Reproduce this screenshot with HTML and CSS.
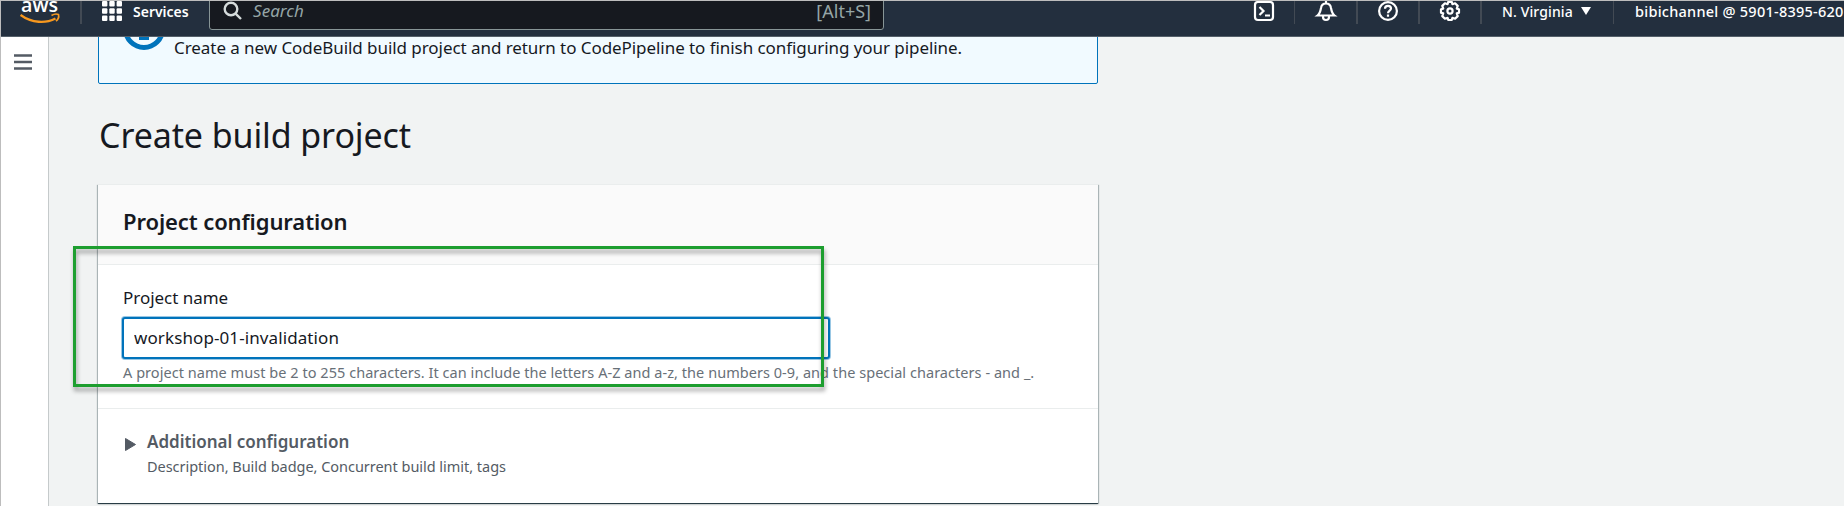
FILE: index.html
```
<!DOCTYPE html>
<html lang="en">
<head>
<meta charset="utf-8">
<title>Create build project</title>
<link rel="stylesheet" href="styles.css">
</head>
<body>
<div class="window">
  <header class="topbar">
    <nav class="nav">
      <svg class="logo" width="42" height="40" viewBox="0 0 42 40">
        <text class="logo-text" x="1" y="20.500" textLength="37" lengthAdjust="spacingAndGlyphs">aws</text>
        <path d="M.5 24C12 32.500 26 32.500 35.500 27.500" fill="none" stroke="#f7981f" stroke-width="2.4"/>
        <path d="M31.500 24.400C34 23 37 22.800 38.500 23.600C39 25.500 38 28.500 36 30.200" fill="none" stroke="#f7981f" stroke-width="1.7"/>
      </svg>
      <span class="sep sep-wide sep-logo"></span>
      <svg class="grid-icon" width="20" height="20" viewBox="0 0 20 20" fill="#fff">
        <rect width="5.400" height="5.400" rx="1"/><rect x="7.300" width="5.400" height="5.400" rx="1"/><rect x="14.600" width="5.400" height="5.400" rx="1"/>
        <rect y="7.300" width="5.400" height="5.400" rx="1"/><rect x="7.300" y="7.300" width="5.400" height="5.400" rx="1"/><rect x="14.600" y="7.300" width="5.400" height="5.400" rx="1"/>
        <rect y="14.600" width="5.400" height="5.400" rx="1"/><rect x="7.300" y="14.600" width="5.400" height="5.400" rx="1"/><rect x="14.600" y="14.600" width="5.400" height="5.400" rx="1"/>
      </svg>
      <span class="services">Services</span>
      <div class="search">
        <svg width="20" height="20" viewBox="0 0 20 20" fill="none" stroke="#d5dbdb" stroke-width="2.400"><circle cx="8" cy="8" r="6.300"/><path d="M12.300 12.300L18 18"/></svg>
        <span class="search-hint">Search</span>
        <span class="search-key">[Alt+S]</span>
      </div>
      <div class="tools">
        <svg class="tool" viewBox="0 0 20 20"><rect x="1" y="1" width="18" height="18" rx="3"/><path d="M5.500 6L9.500 10L5.500 14M11 14.500H16"/></svg>
        <span class="sep"></span>
        <svg class="tool tool-bell" viewBox="0 0 20 20"><path d="M1.500 14.500C4 12.500 4.500 10 5 7C5.500 3.500 7 2.500 10 2.500S14.500 3.500 15 7C15.500 10 16 12.500 18.500 14.500ZM10 0V2.500M7 15V16A3 3 0 0 0 13 16V15"/></svg>
        <span class="sep sep-wide"></span>
        <svg class="tool" viewBox="0 0 20 20"><circle cx="10" cy="10" r="8.900"/><path d="M7 7.800C7 5.600 8.300 4.800 10 4.800S13 5.900 13 7.500C13 9.700 10 9.500 10 12.300M10 13.500V15.700"/></svg>
        <span class="sep sep-wide"></span>
        <svg class="tool" viewBox="0 0 20 20"><path stroke-linejoin="round" d="M8.200 1H11.800L12.400 3.200L15.100 2.300L17.700 4.900L16.800 7.600L19 8.200V11.800L16.800 12.400L17.700 15.100L15.100 17.700L12.400 16.800L11.800 19H8.200L7.600 16.800L4.900 17.700L2.300 15.100L3.200 12.400L1 11.800V8.200L3.200 7.600L2.300 4.900L4.900 2.300L7.600 3.200Z"/><circle cx="10" cy="10" r="2.600"/></svg>
        <span class="sep sep-wide"></span>
      </div>
      <span class="region">N. Virginia</span>
      <svg class="caret" width="10" height="8" viewBox="0 0 10 8"><path d="M0 0H10L5 8Z" fill="#fff"/></svg>
      <span class="sep"></span>
      <span class="account">bibichannel @ 5901-8395-620</span>
    </nav>
  </header>
  <div class="body">
    <aside class="rail">
      <svg width="18" height="16" viewBox="0 0 18 16" stroke="#545b64" stroke-width="2.400"><path d="M0 1.500H18M0 8H18M0 14.500H18"/></svg>
    </aside>
    <main class="main">
      <div class="alert">
        <svg width="42" height="42" viewBox="0 0 42 42"><circle cx="21" cy="21" r="18.500" fill="none" stroke="#0073bb" stroke-width="5"/><path d="M17 18H24V28H26V32H16V28H19V22H17ZM18 10H24V15H18Z" fill="#0073bb"/></svg>
        <p class="alert-text">Create a new CodeBuild build project and return to CodePipeline to finish configuring your pipeline.</p>
      </div>
      <h1 class="title">Create build project</h1>
      <section class="card">
        <div class="card-head"><h2 class="card-title">Project configuration</h2></div>
        <div class="field">
          <label class="label" for="name">Project name</label>
          <input class="input" id="name" type="text" value="workshop-01-invalidation">
          <p class="help">A project name must be 2 to 255 characters. It can include the letters A-Z and a-z, the numbers 0-9, and the special characters - and _.</p>
        </div>
        <div class="extra">
          <svg class="arrow" width="11" height="13" viewBox="0 0 11 13"><path d="M.5 .5L10.500 6.500L.5 12.500Z" fill="#545b64" stroke="#545b64" stroke-linejoin="round"/></svg>
          <div>
            <h3 class="extra-title">Additional configuration</h3>
            <p class="extra-text">Description, Build badge, Concurrent build limit, tags</p>
          </div>
        </div>
      </section>
    </main>
  </div>
  <div class="highlight"></div>
</div>
</body>
</html>
```
FILE: styles.css
```
* { box-sizing: border-box; }
body { margin: 0; overflow: hidden; font-family: "Noto Sans", sans-serif; color: #16191f; }
h1, h2, h3, p { margin: 0; }
svg { display: block; flex: none; }
.window { position: relative; width: 1844px; height: 506px; overflow: hidden; background: #f1f3f3; border-top: 1px solid #bdbdbd; border-left: 1px solid #bdbdbd; white-space: nowrap; }

.topbar { height: 36px; overflow: hidden; background: #232f3e; border-bottom: 1px solid #545f69; color: #fff; }
.nav { display: flex; align-items: center; height: 52px; margin-top: -16px; padding-left: 19px; font-size: 14px; font-weight: 500; }
.logo-text { font-family: "Open Sans", sans-serif; font-size: 20px; font-weight: 600; fill: #fff; }
.sep { flex: none; width: 1px; height: 26px; background: #424a54; }
.sep-wide { width: 2px; }
.sep-logo { margin-left: 18px; }
.grid-icon { margin-left: 20px; }
.services { width: 76px; margin-left: 11px; font-weight: 600; }
.search { display: flex; align-items: center; flex: none; width: 675px; height: 38px; padding: 0 12px 0 13px; background: #16191f; border: 1px solid #879596; border-radius: 3px; color: #95a5a6; font-size: 17px; font-weight: 400; }
.search-hint { margin-left: 10px; font-style: italic; line-height: 22px; padding-bottom: 1px; letter-spacing: .05px; }
.search-key { margin-left: auto; font-size: 18px; line-height: 22px; padding-bottom: 1px; }
.tools { display: flex; align-items: center; flex: none; gap: 20px; margin-left: 370px; }
.tool { width: 20px; height: 20px; fill: none; stroke: #fff; stroke-width: 2.2; overflow: visible; }
.tool-bell { margin-left: 1px; }
.region { width: 71px; margin-left: 20px; letter-spacing: .12px; }
.caret { margin: 0 22px 0 8px; }
.account { margin-left: 21px; font-size: 14.5px; letter-spacing: .25px; }

.body { display: flex; height: 469px; }
.rail { flex: none; width: 48px; padding: 17px 0 0 13px; background: #fff; border-right: 1px solid #c5cacb; }
.main { width: 1001px; margin-left: 49px; clip-path: inset(0 -10px -10px -10px); }
.alert { display: flex; width: 1000px; height: 84px; margin-top: -37px; padding: 7px 0 0 24px; background: #f1faff; border: 1px solid #0073bb; border-radius: 2px; }
.alert-text { margin: 28px 0 0 9px; font-size: 17px; line-height: 24px; letter-spacing: -.06px; }
.title { margin: 27px 0 0 1px; font-size: 34px; font-weight: 400; line-height: 48px; letter-spacing: -.1px; }
.card { width: 1000px; height: 319px; margin-top: 25px; background: #fff; border-top: 1px solid #eaeded; box-shadow: 0 1px 1px #001c244d, 1px 1px 1px #001c2440, -1px 1px 1px #001c2440, 0 1px 0 #687078; }
.card-head { height: 80px; padding-top: 20px; background: #fafafa; border-bottom: 1px solid #eaeded; }
.card-title { padding-left: 25px; font-size: 22px; font-weight: 600; line-height: 32px; letter-spacing: -.1px; }
.field { display: flex; flex-direction: column; height: 144px; padding: 21px 24px 0; border-bottom: 1px solid #eaeded; }
.label { margin-left: 1px; font-size: 17px; line-height: 24px; letter-spacing: -.03px; }
.input { width: 708px; height: 42px; margin-top: 7px; padding: 0 10px 2px; border: 2px solid #0073bb; border-radius: 3px; outline: none; box-shadow: 0 0 0 1px #99c7e4; background: #fff; color: #16191f; font: 17px "Noto Sans", sans-serif; letter-spacing: .1px; }
.help { margin: 3px 0 0 1px; color: #687078; font-size: 14.5px; line-height: 20px; letter-spacing: .045px; }
.extra { display: flex; gap: 11px; padding: 20px 0 0 27px; color: #545b64; }
.arrow { margin-top: 9px; }
.extra-title { font-size: 17px; font-weight: 600; line-height: 25px; }
.extra-text { font-size: 14.5px; line-height: 24px; letter-spacing: -.03px; }

.highlight { position: absolute; left: 72px; top: 245px; width: 751px; height: 141px; border: 3px solid #1d9e2f; filter: drop-shadow(1px 4px 2px #0000005c); }
```
